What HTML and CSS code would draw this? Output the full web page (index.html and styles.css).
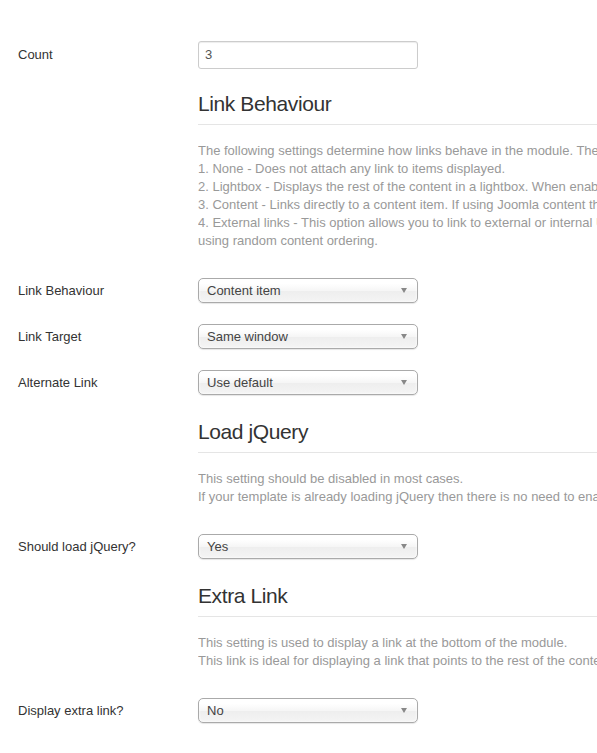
FILE: index.html
```html
<!DOCTYPE html>
<html>
<head>
<meta charset="utf-8">
<link rel="stylesheet" href="styles.css">
</head>
<body>
<div class="form">
  <div class="row row-first">
    <div class="label">Count</div>
    <div class="controls"><div class="input">3</div></div>
  </div>

  <div class="section">
    <div class="legend">Link Behaviour</div>
    <div class="desc">The following settings determine how links behave in the module. There are four options available:<br>
1. None - Does not attach any link to items displayed.<br>
2. Lightbox - Displays the rest of the content in a lightbox. When enabled, clicking on an item opens the full text.<br>
3. Content - Links directly to a content item. If using Joomla content the link goes to the article itself.<br>
4. External links - This option allows you to link to external or internal URLs. Note that this option does not work well when<br>
using random content ordering.</div>
  </div>

  <div class="row">
    <div class="label">Link Behaviour</div>
    <div class="controls"><div class="select"><span>Content item</span><i class="arrow"></i></div></div>
  </div>
  <div class="row">
    <div class="label">Link Target</div>
    <div class="controls"><div class="select"><span>Same window</span><i class="arrow"></i></div></div>
  </div>
  <div class="row row-last">
    <div class="label">Alternate Link</div>
    <div class="controls"><div class="select"><span>Use default</span><i class="arrow"></i></div></div>
  </div>

  <div class="section">
    <div class="legend">Load jQuery</div>
    <div class="desc">This setting should be disabled in most cases.<br>
If your template is already loading jQuery then there is no need to enable this option again.</div>
  </div>

  <div class="row row-last">
    <div class="label">Should load jQuery?</div>
    <div class="controls"><div class="select"><span>Yes</span><i class="arrow"></i></div></div>
  </div>

  <div class="section">
    <div class="legend">Extra Link</div>
    <div class="desc">This setting is used to display a link at the bottom of the module.<br>
This link is ideal for displaying a link that points to the rest of the content in the category.</div>
  </div>

  <div class="row row-last">
    <div class="label">Display extra link?</div>
    <div class="controls"><div class="select"><span>No</span><i class="arrow"></i></div></div>
  </div>
</div>
</body>
</html>
```

FILE: styles.css
```css
html, body {
  margin: 0;
  padding: 0;
  overflow: hidden;
  background: #fff;
}
body {
  font-family: "Helvetica Neue", "Liberation Sans", Arial, sans-serif;
  font-size: 13px;
  line-height: 18px;
  color: #333;
}
.form {
  padding: 41px 0 0 18px;
  width: 900px;
}
.row {
  display: flex;
  align-items: center;
  margin-bottom: 21px;
}
.row-last {
  margin-bottom: 17px;
}
.row-first {
  margin-bottom: 15px;
}
.label {
  width: 180px;
  flex: none;
  color: #333;
}
.controls {
  flex: none;
}
.input {
  box-sizing: border-box;
  width: 220px;
  height: 28px;
  border: 1px solid #ccc;
  border-radius: 3px;
  padding: 4px 6px;
  line-height: 18px;
  color: #555;
  box-shadow: inset 0 1px 1px rgba(0,0,0,0.075);
}
.select {
  box-sizing: border-box;
  width: 220px;
  height: 25px;
  border: 1px solid #aaa;
  border-radius: 5px;
  padding: 0 8px;
  line-height: 23px;
  color: #444;
  background: linear-gradient(#ffffff 20%, #f6f6f6 50%, #eeeeee 52%, #f4f4f4 100%);
  box-shadow: 0 0 3px #fff inset, 0 1px 1px rgba(0,0,0,0.1);
  display: flex;
  align-items: center;
  justify-content: space-between;
}
.arrow {
  width: 0;
  height: 0;
  border-left: 3.5px solid transparent;
  border-right: 3.5px solid transparent;
  border-top: 5px solid #888;
  margin-right: 2px;
}
.section {
  margin-left: 180px;
  margin-bottom: 28px;
  overflow: hidden;
}
.legend {
  font-size: 21px;
  line-height: 40px;
  letter-spacing: -0.4px;
  color: #333;
  border-bottom: 1px solid #e5e5e5;
  margin-bottom: 17px;
}
.desc {
  color: #999;
  white-space: nowrap;
}
```
